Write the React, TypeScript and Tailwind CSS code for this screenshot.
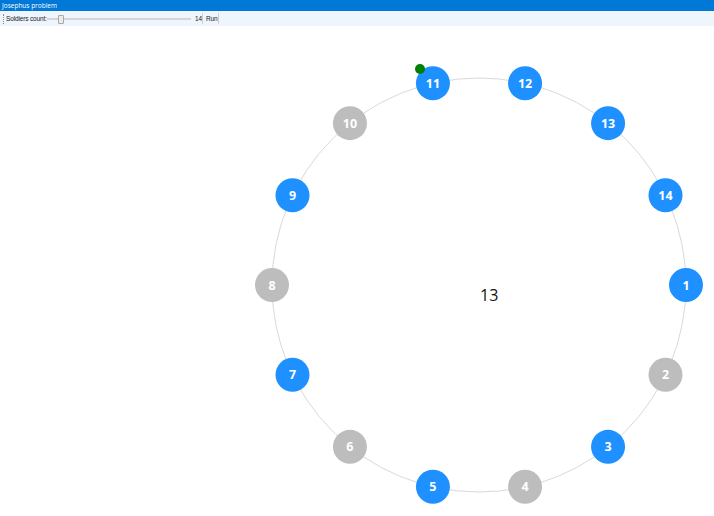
import React from 'react';

const COUNT = 14;
const CX = 479;
const CY = 259;
const R = 207;
const dead = [2, 4, 6, 8, 10];

const soldiers = Array.from({ length: COUNT }, (_, i) => {
  const a = (i * 2 * Math.PI) / COUNT;
  return { n: i + 1, x: CX + R * Math.cos(a), y: CY + R * Math.sin(a), alive: !dead.includes(i + 1) };
});

const App: React.FC = () => {
  return (
    <div className="w-[714px] h-[516px] bg-white overflow-hidden" style={{ fontFamily: '"Open Sans", "Noto Sans", sans-serif' }}>
      <div className="h-[11px] bg-[#0078d7] text-white text-[6.5px] leading-[11px] pl-[2px]">Josephus problem</div>
      <div className="h-[15px] bg-[#eef5fd] flex items-center text-[6.5px] tracking-[-0.15px] text-[#1a1a1a] whitespace-nowrap font-['Liberation_Sans',sans-serif]">
        <div className="ml-[3px] h-[10px] border-l border-dotted border-[#8a8a8a]" />
        <span className="ml-[2px] w-[41px] shrink-0">Soldiers count:</span>
        <div className="relative w-[144px] shrink-0 h-[10px] flex items-center">
          <div className="w-full h-[2px] bg-[#d6d6d6]" />
          <div className="absolute left-[11px] top-[1px] w-[6px] h-[9px] bg-[#ececec] border border-[#a8a8a8] rounded-[1px]" />
        </div>
        <span className="ml-[4px] w-[7px] shrink-0">14</span>
        <div className="h-[11px] w-px bg-[#cfcfcf]" />
        <span className="ml-[3px] w-[11px] shrink-0">Run</span>
        <div className="ml-[1px] h-[11px] w-px bg-[#cfcfcf]" />
      </div>
      <svg width={714} height={490} className="block">
        <circle cx={CX} cy={CY} r={R} fill="none" stroke="#d9d9d9" strokeWidth={1} />
        {soldiers.map((s) => (
          <g key={s.n}>
            <circle cx={s.x} cy={s.y} r={17} fill={s.alive ? '#1e90ff' : '#bdbdbd'} />
            <text
              x={s.x}
              y={s.y + 4.5}
              textAnchor="middle"
              fill="white"
              fontWeight={700}
              fontSize={12.5}
              fontFamily='"Open Sans", "Noto Sans", sans-serif'
            >
              {s.n}
            </text>
          </g>
        ))}
        <circle cx={420} cy={43} r={5} fill="#008000" />
        <text x={480} y={275} fontSize={16} fill="#111" fontFamily='"Open Sans", "Noto Sans", sans-serif'>
          13
        </text>
      </svg>
    </div>
  );
};

export default App;
